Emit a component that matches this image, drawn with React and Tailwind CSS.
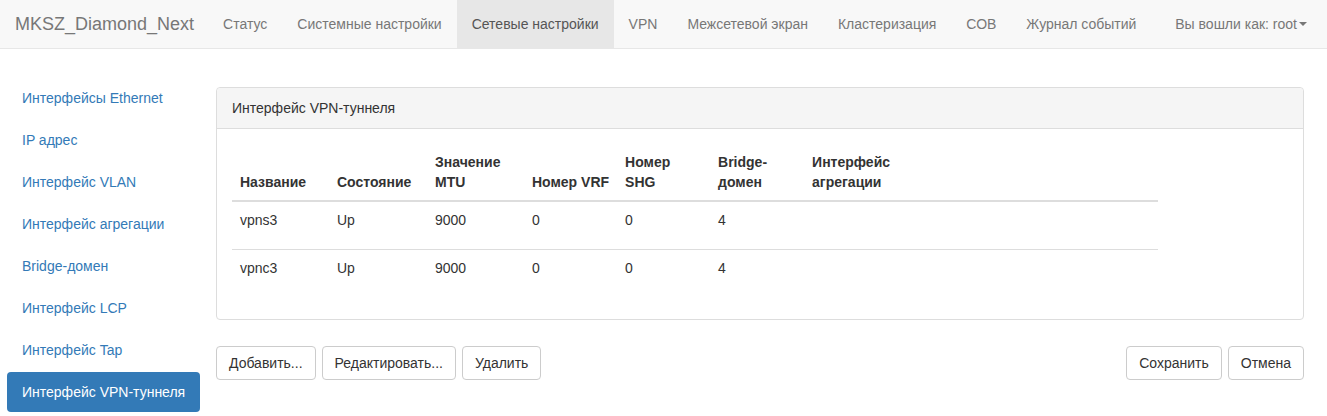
const navLinks = [
  'Статус',
  'Системные настройки',
  'Сетевые настройки',
  'VPN',
  'Межсетевой экран',
  'Кластеризация',
  'СОВ',
  'Журнал событий',
];

const sideLinks = [
  'Интерфейсы Ethernet',
  'IP адрес',
  'Интерфейс VLAN',
  'Интерфейс агрегации',
  'Bridge-домен',
  'Интерфейс LCP',
  'Интерфейс Tap',
  'Интерфейс VPN-туннеля',
];

const rows = [
  { name: 'vpns3', state: 'Up', mtu: '9000', vrf: '0', shg: '0', bd: '4', h: 'h-[48px]' },
  { name: 'vpnc3', state: 'Up', mtu: '9000', vrf: '0', shg: '0', bd: '4', h: 'h-[36px]' },
];

function Btn({ children }) {
  return (
    <button className="h-[34px] px-3 rounded border border-[#ccc] bg-white text-[14px] text-[#333]">
      {children}
    </button>
  );
}

export default function App() {
  return (
    <div className="min-h-[416px] bg-white text-[14px] leading-5 text-[#333]" style={{ fontFamily: '"Liberation Sans", Arial, sans-serif' }}>
      {/* Navbar */}
      <div className="flex h-[49px] items-stretch border-b border-[#e7e7e7] bg-[#f8f8f8] pl-[15px] pr-[20px] text-[#777]">
        <div className="flex items-center pr-[14px] text-[18px]">MKSZ_Diamond_Next</div>
        <div className="flex">
          {navLinks.map((l, i) => (
            <div
              key={l}
              className={`flex items-center px-[15px] ${i === 2 ? 'bg-[#e7e7e7] text-[#555]' : ''}`}
            >
              {l}
            </div>
          ))}
        </div>
        <div className="ml-auto flex items-center">
          Вы вошли как: root
          <span className="ml-[2px] inline-block border-x-[4px] border-t-[4px] border-x-transparent border-t-[#777]" />
        </div>
      </div>

      <div className="flex pt-[29px]">
        {/* Sidebar */}
        <div className="ml-[7px] w-[193px] flex flex-col gap-[2px]">
          {sideLinks.map((l, i) => (
            <div
              key={l}
              className={`h-[40px] flex items-center px-[15px] rounded whitespace-nowrap ${
                i === 7 ? 'bg-[#337ab7] text-white' : 'text-[#337ab7]'
              }`}
            >
              {l}
            </div>
          ))}
        </div>

        {/* Content */}
        <div className="ml-[16px] w-[1088px] pt-[9px]">
          <div className="rounded border border-[#ddd]">
            <div className="h-[41px] flex items-center px-[15px] bg-[#f5f5f5] border-b border-[#ddd] rounded-t">
              Интерфейс VPN-туннеля
            </div>
            <div className="px-[15px] pt-[15px] pb-[34px]">
              <table className="w-[926px] border-collapse text-left">
                <thead>
                  <tr className="border-b-2 border-[#ddd] align-bottom font-bold">
                    <th className="w-[97px] p-2">Название</th>
                    <th className="w-[98px] p-2">Состояние</th>
                    <th className="w-[97px] p-2">Значение MTU</th>
                    <th className="w-[93px] p-2 whitespace-nowrap">Номер VRF</th>
                    <th className="w-[93px] p-2">Номер SHG</th>
                    <th className="w-[94px] p-2">Bridge-домен</th>
                    <th className="w-[94px] p-2">Интерфейс агрегации</th>
                    <th className="p-2"></th>
                  </tr>
                </thead>
                <tbody>
                  {rows.map((r, i) => (
                    <tr key={r.name} className={`${r.h} align-top ${i === 0 ? 'border-b border-[#ddd]' : ''}`}>
                      <td className="px-2 pt-[8px]">{r.name}</td>
                      <td className="px-2 pt-[8px]">{r.state}</td>
                      <td className="px-2 pt-[8px]">{r.mtu}</td>
                      <td className="px-2 pt-[8px]">{r.vrf}</td>
                      <td className="px-2 pt-[8px]">{r.shg}</td>
                      <td className="px-2 pt-[8px]">{r.bd}</td>
                      <td className="px-2 pt-[8px]"></td>
                      <td className="px-2 pt-[8px]"></td>
                    </tr>
                  ))}
                </tbody>
              </table>
            </div>
          </div>

          <div className="mt-[26px] flex">
            <div className="flex gap-[6px]">
              <Btn>Добавить...</Btn>
              <Btn>Редактировать...</Btn>
              <Btn>Удалить</Btn>
            </div>
            <div className="ml-auto flex gap-[6px]">
              <Btn>Сохранить</Btn>
              <Btn>Отмена</Btn>
            </div>
          </div>
        </div>
      </div>
    </div>
  );
}
